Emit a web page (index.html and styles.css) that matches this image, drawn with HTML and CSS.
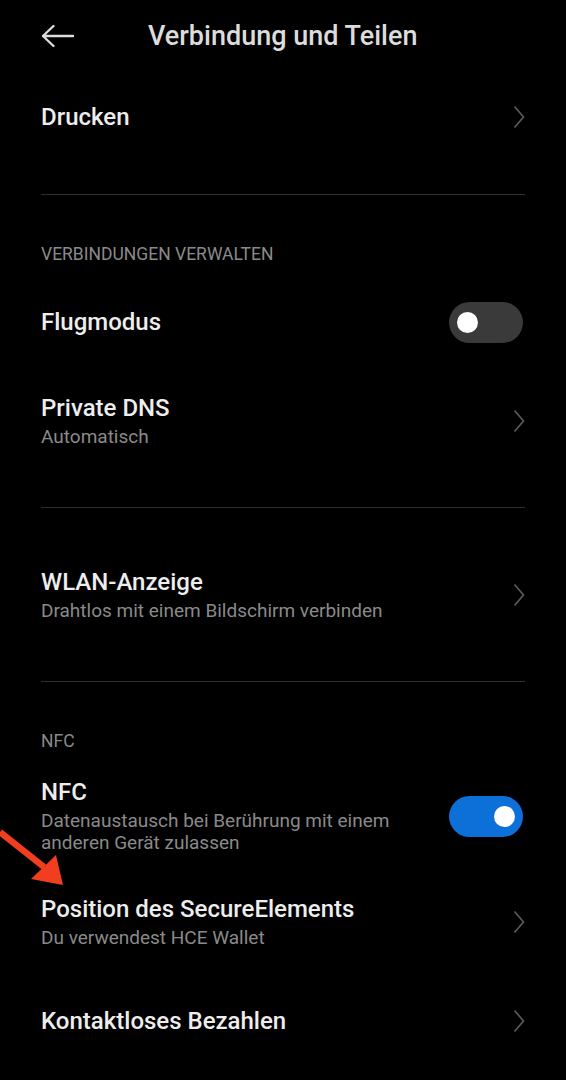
FILE: index.html
```html
<!DOCTYPE html>
<html lang="de">

<head>
    <meta charset="UTF-8">
    <meta name="viewport" content="width=device-width, initial-scale=1.0">
    <title>Verbindung und Teilen</title>
    <link rel="stylesheet" href="styles.css">
</head>

<body>
    <div id="screen">
        <div class="topbar">
            <svg class="back-icon" width="34" height="24" viewBox="0 0 34 24">
                <path d="M2 12 H32 M12.5 2 L2 12 L12.5 22" fill="none" stroke="#dcdcdc" stroke-width="2.4" stroke-linecap="round" stroke-linejoin="round"/>
            </svg>
            <h1 class="page-title">Verbindung und Teilen</h1>
        </div>

        <div class="row">
            <div class="row-text">
                <div class="row-title">Drucken</div>
            </div>
            <svg class="chevron" width="12" height="24" viewBox="0 0 12 24"><path d="M1.5 1.5 L10.5 12 L1.5 22.5" fill="none" stroke="#5e5e5e" stroke-width="1.6"/></svg>
        </div>

        <div class="sep"></div>

        <div class="section-label">VERBINDUNGEN VERWALTEN</div>

        <div class="row">
            <div class="row-text">
                <div class="row-title">Flugmodus</div>
            </div>
            <div class="switch"><span class="knob"></span></div>
        </div>

        <div class="row two-line">
            <div class="row-text">
                <div class="row-title">Private DNS</div>
                <div class="row-sub">Automatisch</div>
            </div>
            <svg class="chevron" width="12" height="24" viewBox="0 0 12 24"><path d="M1.5 1.5 L10.5 12 L1.5 22.5" fill="none" stroke="#5e5e5e" stroke-width="1.6"/></svg>
        </div>

        <div class="sep"></div>

        <div class="row two-line">
            <div class="row-text">
                <div class="row-title">WLAN-Anzeige</div>
                <div class="row-sub">Drahtlos mit einem Bildschirm verbinden</div>
            </div>
            <svg class="chevron" width="12" height="24" viewBox="0 0 12 24"><path d="M1.5 1.5 L10.5 12 L1.5 22.5" fill="none" stroke="#5e5e5e" stroke-width="1.6"/></svg>
        </div>

        <div class="sep"></div>

        <div class="section-label">NFC</div>

        <div class="row nfc-row">
            <div class="row-text">
                <div class="row-title">NFC</div>
                <div class="row-sub">Datenaustausch bei Berührung mit einem anderen Gerät zulassen</div>
            </div>
            <div class="switch on"><span class="knob"></span></div>
        </div>

        <div class="row two-line">
            <div class="row-text">
                <div class="row-title">Position des SecureElements</div>
                <div class="row-sub">Du verwendest HCE Wallet</div>
            </div>
            <svg class="chevron" width="12" height="24" viewBox="0 0 12 24"><path d="M1.5 1.5 L10.5 12 L1.5 22.5" fill="none" stroke="#5e5e5e" stroke-width="1.6"/></svg>
        </div>

        <div class="row">
            <div class="row-text">
                <div class="row-title">Kontaktloses Bezahlen</div>
            </div>
            <svg class="chevron" width="12" height="24" viewBox="0 0 12 24"><path d="M1.5 1.5 L10.5 12 L1.5 22.5" fill="none" stroke="#5e5e5e" stroke-width="1.6"/></svg>
        </div>

        <!-- red pointer drawn over the list -->
        <svg class="pointer" width="70" height="66" viewBox="0 0 70 66">
            <path d="M0 7 L44 42" stroke="#f03e1e" stroke-width="6.5" fill="none"/>
            <polygon points="31,54 56,30 63,60" fill="#f03e1e"/>
        </svg>
    </div>
</body>

</html>
```

FILE: styles.css
```css
body {
    margin: 0;
    background-color: #000;
    font-family: Roboto, "Noto Sans", "Liberation Sans", sans-serif;
    color: #ececec;
}

#screen {
    position: relative;
    width: 566px;
    height: 1080px;
    overflow: hidden;
    background-color: #000;
}

.topbar {
    display: flex;
    align-items: center;
    height: 72px;
    padding: 0 41px;
    gap: 73px;
}

.back-icon {
    flex: none;
}

.page-title {
    margin: 0;
    font-size: 27px;
    font-weight: 500;
    color: #dcdcdc;
}

.row {
    display: flex;
    align-items: center;
    justify-content: space-between;
    min-height: 90px;
    padding: 0 43px 0 41px;
    box-sizing: border-box;
}

.row.two-line {
    min-height: 108px;
}

.row.nfc-row {
    min-height: 104px;
}

.row-text {
    display: flex;
    flex-direction: column;
    gap: 4px;
}

.row-title {
    font-size: 24px;
    font-weight: 500;
    line-height: 28px;
    color: #ededed;
}

.row-sub {
    font-size: 19px;
    line-height: 22px;
    color: #8a8a8a;
}

.nfc-row .row-sub {
    max-width: 370px;
}

.chevron {
    flex: none;
    margin-right: -2px;
}

.sep {
    height: 1px;
    margin: 32px 41px 33px;
    background-color: #2e2e2e;
}

.section-label {
    padding: 16px 41px 0;
    margin-bottom: 13px;
    font-size: 17.5px;
    line-height: 20px;
    color: #8a8a8a;
}

.switch {
    flex: none;
    display: flex;
    align-items: center;
    width: 74px;
    height: 41px;
    padding: 0 8px;
    box-sizing: border-box;
    border-radius: 21px;
    background-color: #3a3a3a;
}

.switch .knob {
    width: 21px;
    height: 21px;
    border-radius: 50%;
    background-color: #fff;
}

.switch.on {
    justify-content: flex-end;
    background-color: #0d70d9;
}

.pointer {
    position: absolute;
    left: 0;
    top: 825px;
}
```
